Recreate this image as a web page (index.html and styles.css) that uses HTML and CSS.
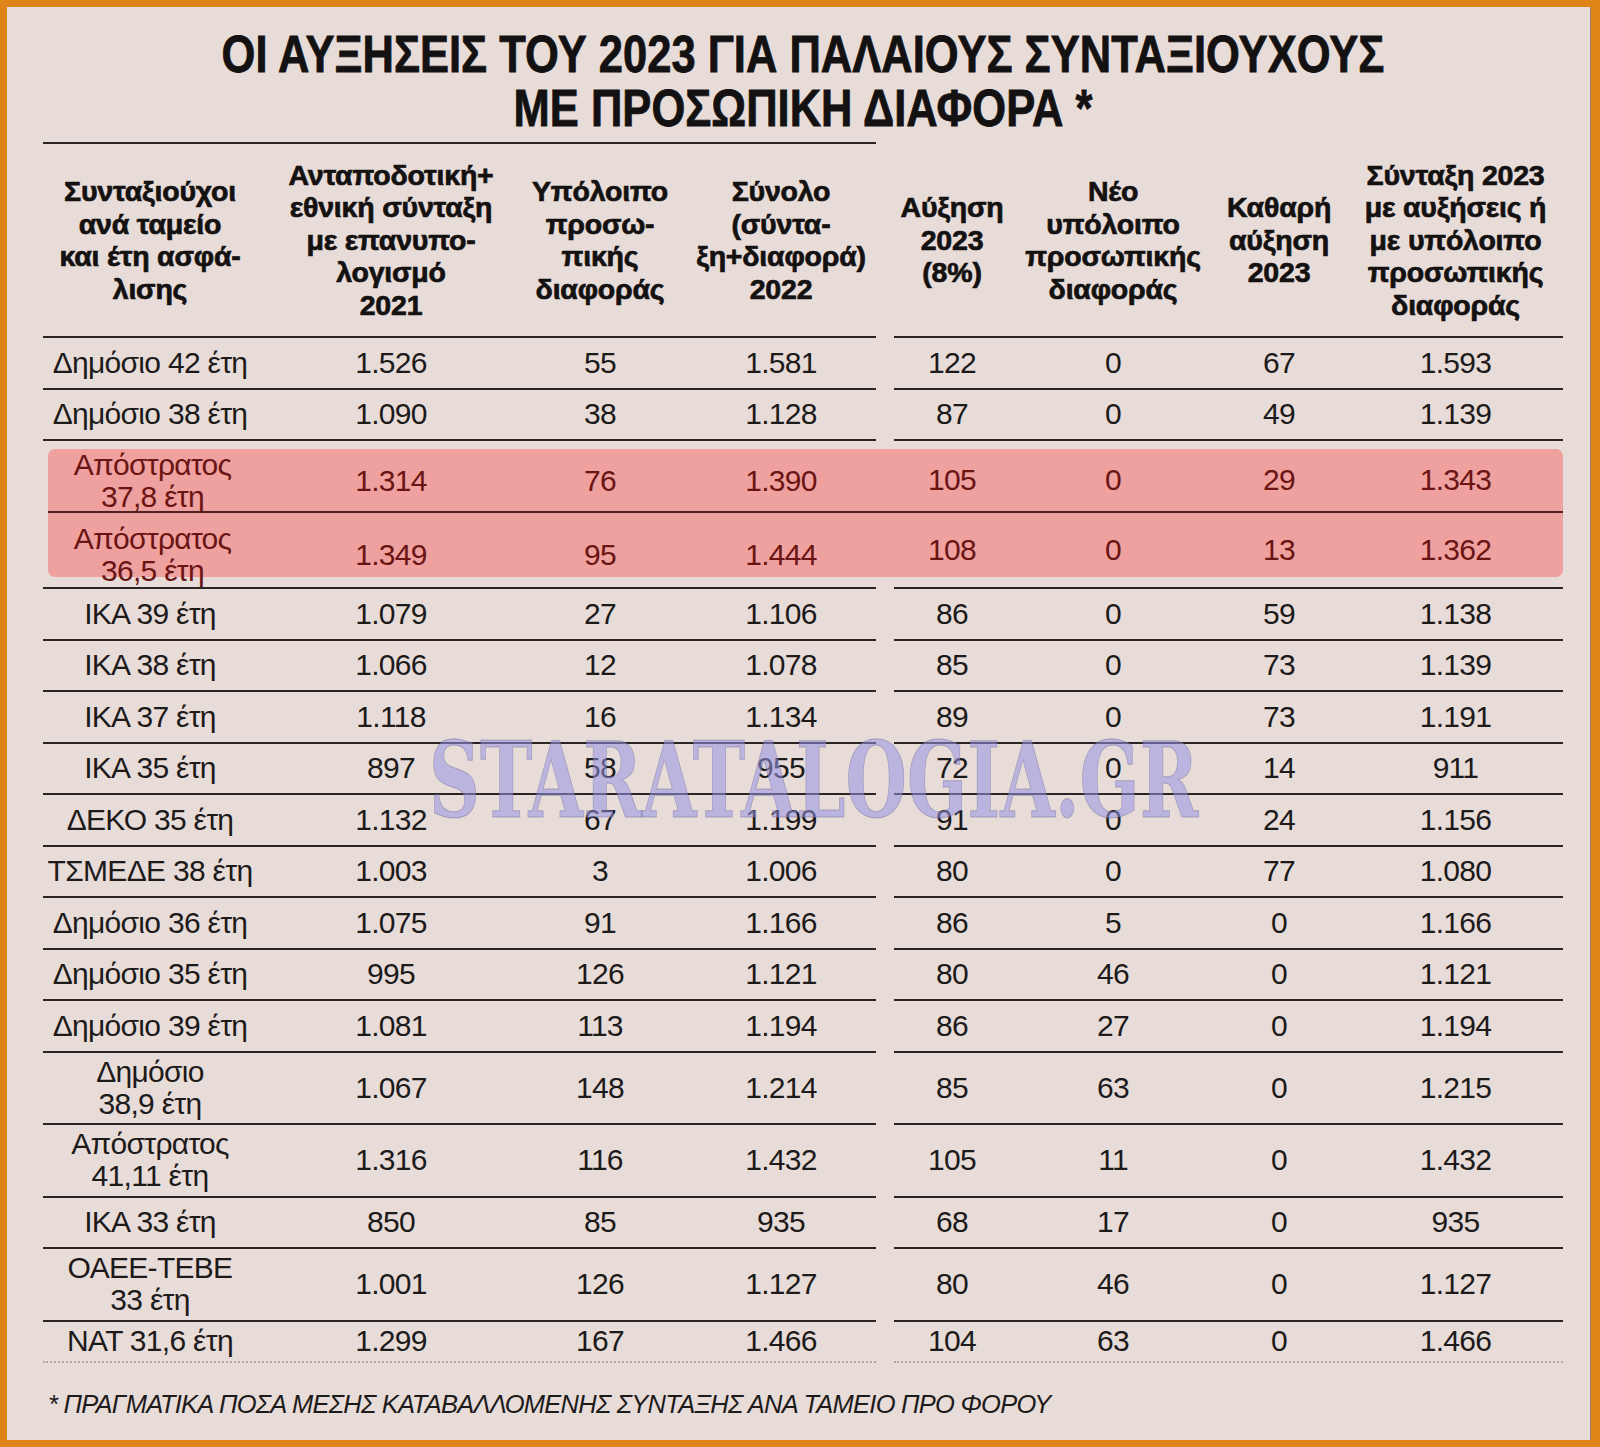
FILE: index.html
```
<!DOCTYPE html>
<html lang="el">
<head>
<meta charset="utf-8">
<title>Οι αυξήσεις του 2023</title>
<link rel="stylesheet" href="styles.css">
</head>
<body>
<div class="paper">
  <h1 class="title"><span>ΟΙ ΑΥΞΗΣΕΙΣ ΤΟΥ 2023 ΓΙΑ ΠΑΛΑΙΟΥΣ ΣΥΝΤΑΞΙΟΥΧΟΥΣ</span><span>ΜΕ ΠΡΟΣΩΠΙΚΗ ΔΙΑΦΟΡΑ *</span></h1>

  <div class="table">
    <div class="row head">
      <div class="grp left">
        <div class="c">Συνταξιούχοι<br>ανά ταμείο<br>και έτη ασφά-<br>λισης</div>
        <div class="c">Ανταποδοτική+<br>εθνική σύνταξη<br>με επανυπο-<br>λογισμό<br>2021</div>
        <div class="c">Υπόλοιπο<br>προσω-<br>πικής<br>διαφοράς</div>
        <div class="c c4">Σύνολο<br>(σύντα-<br>ξη+διαφορά)<br>2022</div>
      </div>
      <div class="grp right">
        <div class="c">Αύξηση<br>2023<br>(8%)</div>
        <div class="c">Νέο<br>υπόλοιπο<br>προσωπικής<br>διαφοράς</div>
        <div class="c">Καθαρή<br>αύξηση<br>2023</div>
        <div class="c c8">Σύνταξη 2023<br>με αυξήσεις ή<br>με υπόλοιπο<br>προσωπικής<br>διαφοράς</div>
      </div>
    </div>

    <div class="row">
      <div class="grp left"><div class="c">Δημόσιο 42 έτη</div><div class="c">1.526</div><div class="c">55</div><div class="c c4">1.581</div></div>
      <div class="grp right"><div class="c">122</div><div class="c">0</div><div class="c">67</div><div class="c c8">1.593</div></div>
    </div>
    <div class="row">
      <div class="grp left"><div class="c">Δημόσιο 38 έτη</div><div class="c">1.090</div><div class="c">38</div><div class="c c4">1.128</div></div>
      <div class="grp right"><div class="c">87</div><div class="c">0</div><div class="c">49</div><div class="c c8">1.139</div></div>
    </div>

    <div class="hlwrap">
      <div class="hlbox">
        <div class="row hl first">
          <div class="grp left"><div class="c lbl">Απόστρατος<br>37,8 έτη</div><div class="c">1.314</div><div class="c">76</div><div class="c c4">1.390</div></div>
          <div class="grp right"><div class="c">105</div><div class="c">0</div><div class="c">29</div><div class="c c8">1.343</div></div>
        </div>
        <div class="row hl second">
          <div class="grp left"><div class="c lbl">Απόστρατος<br>36,5 έτη</div><div class="c">1.349</div><div class="c">95</div><div class="c c4">1.444</div></div>
          <div class="grp right"><div class="c">108</div><div class="c">0</div><div class="c">13</div><div class="c c8">1.362</div></div>
        </div>
      </div>
      <div class="row spacer"><div class="grp left"></div><div class="grp right"></div></div>
    </div>

    <div class="row">
      <div class="grp left"><div class="c">ΙΚΑ 39 έτη</div><div class="c">1.079</div><div class="c">27</div><div class="c c4">1.106</div></div>
      <div class="grp right"><div class="c">86</div><div class="c">0</div><div class="c">59</div><div class="c c8">1.138</div></div>
    </div>
    <div class="row">
      <div class="grp left"><div class="c">ΙΚΑ 38 έτη</div><div class="c">1.066</div><div class="c">12</div><div class="c c4">1.078</div></div>
      <div class="grp right"><div class="c">85</div><div class="c">0</div><div class="c">73</div><div class="c c8">1.139</div></div>
    </div>
    <div class="row">
      <div class="grp left"><div class="c">ΙΚΑ 37 έτη</div><div class="c">1.118</div><div class="c">16</div><div class="c c4">1.134</div></div>
      <div class="grp right"><div class="c">89</div><div class="c">0</div><div class="c">73</div><div class="c c8">1.191</div></div>
    </div>
    <div class="row">
      <div class="grp left"><div class="c">ΙΚΑ 35 έτη</div><div class="c">897</div><div class="c">58</div><div class="c c4">955</div></div>
      <div class="grp right"><div class="c">72</div><div class="c">0</div><div class="c">14</div><div class="c c8">911</div></div>
    </div>
    <div class="row">
      <div class="grp left"><div class="c">ΔΕΚΟ 35 έτη</div><div class="c">1.132</div><div class="c">67</div><div class="c c4">1.199</div></div>
      <div class="grp right"><div class="c">91</div><div class="c">0</div><div class="c">24</div><div class="c c8">1.156</div></div>
    </div>
    <div class="row">
      <div class="grp left"><div class="c">ΤΣΜΕΔΕ 38 έτη</div><div class="c">1.003</div><div class="c">3</div><div class="c c4">1.006</div></div>
      <div class="grp right"><div class="c">80</div><div class="c">0</div><div class="c">77</div><div class="c c8">1.080</div></div>
    </div>
    <div class="row">
      <div class="grp left"><div class="c">Δημόσιο 36 έτη</div><div class="c">1.075</div><div class="c">91</div><div class="c c4">1.166</div></div>
      <div class="grp right"><div class="c">86</div><div class="c">5</div><div class="c">0</div><div class="c c8">1.166</div></div>
    </div>
    <div class="row">
      <div class="grp left"><div class="c">Δημόσιο 35 έτη</div><div class="c">995</div><div class="c">126</div><div class="c c4">1.121</div></div>
      <div class="grp right"><div class="c">80</div><div class="c">46</div><div class="c">0</div><div class="c c8">1.121</div></div>
    </div>
    <div class="row">
      <div class="grp left"><div class="c">Δημόσιο 39 έτη</div><div class="c">1.081</div><div class="c">113</div><div class="c c4">1.194</div></div>
      <div class="grp right"><div class="c">86</div><div class="c">27</div><div class="c">0</div><div class="c c8">1.194</div></div>
    </div>
    <div class="row tall">
      <div class="grp left"><div class="c lbl">Δημόσιο<br>38,9 έτη</div><div class="c">1.067</div><div class="c">148</div><div class="c c4">1.214</div></div>
      <div class="grp right"><div class="c">85</div><div class="c">63</div><div class="c">0</div><div class="c c8">1.215</div></div>
    </div>
    <div class="row tall">
      <div class="grp left"><div class="c lbl">Απόστρατος<br>41,11 έτη</div><div class="c">1.316</div><div class="c">116</div><div class="c c4">1.432</div></div>
      <div class="grp right"><div class="c">105</div><div class="c">11</div><div class="c">0</div><div class="c c8">1.432</div></div>
    </div>
    <div class="row">
      <div class="grp left"><div class="c">ΙΚΑ 33 έτη</div><div class="c">850</div><div class="c">85</div><div class="c c4">935</div></div>
      <div class="grp right"><div class="c">68</div><div class="c">17</div><div class="c">0</div><div class="c c8">935</div></div>
    </div>
    <div class="row tall">
      <div class="grp left"><div class="c lbl">ΟΑΕΕ-ΤΕΒΕ<br>33 έτη</div><div class="c">1.001</div><div class="c">126</div><div class="c c4">1.127</div></div>
      <div class="grp right"><div class="c">80</div><div class="c">46</div><div class="c">0</div><div class="c c8">1.127</div></div>
    </div>
    <div class="row last">
      <div class="grp left"><div class="c">ΝΑΤ 31,6 έτη</div><div class="c">1.299</div><div class="c">167</div><div class="c c4">1.466</div></div>
      <div class="grp right"><div class="c">104</div><div class="c">63</div><div class="c">0</div><div class="c c8">1.466</div></div>
    </div>
  </div>

  <p class="note">* ΠΡΑΓΜΑΤΙΚΑ ΠΟΣΑ ΜΕΣΗΣ ΚΑΤΑΒΑΛΛΟΜΕΝΗΣ ΣΥΝΤΑΞΗΣ ΑΝΑ ΤΑΜΕΙΟ ΠΡΟ ΦΟΡΟΥ</p>

  <div class="watermark">STARATALOGIA.GR</div>
</div>
</body>
</html>
```

FILE: styles.css
```
* {
  box-sizing: border-box;
  margin: 0;
  padding: 0;
}

html, body {
  width: 1600px;
  height: 1447px;
  overflow: hidden;
}

body {
  background: #df8419;
  padding: 7px 9px 7px 7px;
  font-family: "Liberation Sans", Arial, sans-serif;
  color: #1d1a1a;
}

.paper {
  position: relative;
  height: 1433px;
  background: #e8dcd9;
  padding: 21px 28px 0 36px;
  box-shadow: inset -1px 0 0 rgba(60, 40, 30, 0.5);
}

.title {
  font-weight: 700;
  font-size: 51px;
  line-height: 54px;
  text-align: center;
  color: #131111;
  -webkit-text-stroke: 0.8px #131111;
}

.title span {
  display: block;
  white-space: nowrap;
  transform: scaleX(0.853);
  transform-origin: center;
}

.table {
  margin-top: 6px;
  width: 1520px;
}

.row {
  display: flex;
  gap: 18px;
  height: 51.5px;
}

.row.tall {
  height: 72.5px;
}

.row.last {
  height: 41px;
}

.grp {
  display: grid;
  height: 100%;
  border-bottom: 2px solid #2a2424;
}

.grp.left {
  width: 833px;
  grid-template-columns: 214px 268px 150px 201px;
}

.grp.right {
  width: 669px;
  grid-template-columns: 116px 206px 126px 221px;
}

.c {
  display: flex;
  align-items: center;
  justify-content: center;
  text-align: center;
  white-space: nowrap;
  font-size: 30px;
  line-height: 32px;
  letter-spacing: -0.7px;
}

.c4 {
  padding-left: 11px;
}

.c8 {
  padding-left: 6px;
}

.head {
  height: 196px;
}

.head .grp {
  border-top: 2px solid transparent;
}

.head .grp.left {
  border-top-color: #2a2424;
}

.head .c {
  font-weight: 700;
  font-size: 28.5px;
  line-height: 32.5px;
  letter-spacing: -0.2px;
  color: #141111;
  -webkit-text-stroke: 0.7px #141111;
}

.hlwrap {
  height: 148px;
  padding-top: 8px;
}

.hlbox {
  margin-left: 5px;
  width: 1515px;
  height: 128px;
  background: #eea19e;
  border-radius: 7px;
  color: #6a1414;
}

.row.hl {
  height: 64px;
}

.row.hl .grp {
  border: none;
}

.row.hl .grp.left {
  width: 828px;
  grid-template-columns: 209px 268px 150px 201px;
}

.row.hl.first {
  border-bottom: 2px solid #4e2222;
}

.row.hl.second {
  padding-top: 10px;
}

.row.spacer {
  height: 12px;
}

.row.last .grp {
  border-bottom: 2px dotted rgba(110, 100, 100, 0.45);
}

.note {
  margin-top: 26px;
  padding-left: 5px;
  font-style: italic;
  font-size: 25.5px;
  line-height: 30px;
  letter-spacing: -0.75px;
  color: #1d1a1a;
  white-space: nowrap;
}

.watermark {
  position: absolute;
  left: 422px;
  top: 722px;
  font-family: "DejaVu Serif", "Liberation Serif", serif;
  font-weight: 700;
  font-size: 104px;
  line-height: 1;
  white-space: nowrap;
  color: rgba(150, 148, 228, 0.55);
  -webkit-text-stroke: 1px rgba(110, 108, 150, 0.45);
  transform: scaleX(0.678);
  transform-origin: left center;
  pointer-events: none;
}
```
